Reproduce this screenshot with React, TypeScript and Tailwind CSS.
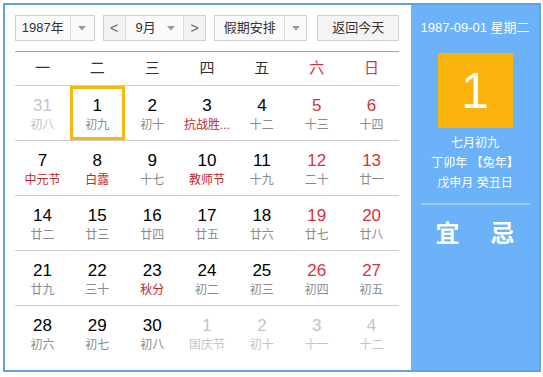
import React from 'react'

type Day = {
  n: number
  lunar: string
  dim?: boolean
  weekend?: boolean
  fest?: boolean
  today?: boolean
}

const weekdays = ['一', '二', '三', '四', '五', '六', '日']

const rows: Day[][] = [
  [
    { n: 31, lunar: '初八', dim: true },
    { n: 1, lunar: '初九', today: true },
    { n: 2, lunar: '初十' },
    { n: 3, lunar: '抗战胜...', fest: true },
    { n: 4, lunar: '十二' },
    { n: 5, lunar: '十三', weekend: true },
    { n: 6, lunar: '十四', weekend: true },
  ],
  [
    { n: 7, lunar: '中元节', fest: true },
    { n: 8, lunar: '白露', fest: true },
    { n: 9, lunar: '十七' },
    { n: 10, lunar: '教师节', fest: true },
    { n: 11, lunar: '十九' },
    { n: 12, lunar: '二十', weekend: true },
    { n: 13, lunar: '廿一', weekend: true },
  ],
  [
    { n: 14, lunar: '廿二' },
    { n: 15, lunar: '廿三' },
    { n: 16, lunar: '廿四' },
    { n: 17, lunar: '廿五' },
    { n: 18, lunar: '廿六' },
    { n: 19, lunar: '廿七', weekend: true },
    { n: 20, lunar: '廿八', weekend: true },
  ],
  [
    { n: 21, lunar: '廿九' },
    { n: 22, lunar: '三十' },
    { n: 23, lunar: '秋分', fest: true },
    { n: 24, lunar: '初二' },
    { n: 25, lunar: '初三' },
    { n: 26, lunar: '初四', weekend: true },
    { n: 27, lunar: '初五', weekend: true },
  ],
  [
    { n: 28, lunar: '初六' },
    { n: 29, lunar: '初七' },
    { n: 30, lunar: '初八' },
    { n: 1, lunar: '国庆节', dim: true },
    { n: 2, lunar: '初十', dim: true },
    { n: 3, lunar: '十一', dim: true },
    { n: 4, lunar: '十二', dim: true },
  ],
]

function Caret() {
  return (
    <svg width="8" height="5" viewBox="0 0 8 5">
      <path d="M0 0h8L4 4.5z" fill="#999" />
    </svg>
  )
}

function DayCell({ d }: { d: Day }) {
  const numColor = d.dim ? 'text-[#c4c4c4]' : d.weekend ? 'text-[#d3333f]' : 'text-black'
  const lunarColor = d.dim
    ? 'text-[#c4c4c4]'
    : d.fest
      ? 'text-[#c1262f]'
      : 'text-[#8a8a8a]'
  return (
    <div
      className={`flex flex-1 flex-col items-center pt-[10px] ${
        d.today ? 'shadow-[inset_0_0_0_3px_#f7b70f]' : ''
      }`}
    >
      <div className={`text-[17px] leading-[20px] ${numColor}`}>{d.n}</div>
      <div className={`text-[12px] leading-[18px] whitespace-nowrap ${lunarColor}`}>{d.lunar}</div>
    </div>
  )
}

export default function App() {
  return (
    <div
      className="h-[377px] w-[543px] bg-white p-[3px]"
      style={{ fontFamily: '"Liberation Sans", "Noto Sans CJK SC", sans-serif' }}
    >
      <div className="flex h-[369px] w-[538px] border-2 border-[#62a2e0]">
        {/* calendar side */}
        <div className="flex w-[406px] flex-col pl-[10px] pr-[12px] pt-[10px]">
          <div className="flex h-[26px] text-[13px] text-[#333]">
            <div className="flex w-[80px] border border-[#cfcfcf] bg-[#fafafa]">
              <div className="flex flex-1 items-center justify-center">1987年</div>
              <div className="flex w-[24px] items-center justify-center border-l border-[#dcdcdc]">
                <Caret />
              </div>
            </div>
            <div className="ml-[8px] flex w-[104px] border border-[#cfcfcf] bg-[#fafafa]">
              <div className="flex w-[22px] items-center justify-center border-r border-[#dcdcdc] bg-[#f2f2f2] text-[14px] text-[#666]">
                &lt;
              </div>
              <div className="flex flex-1 items-center pl-[10px]">
                <span>9月</span>
                <span className="ml-auto mr-[8px] flex">
                  <Caret />
                </span>
              </div>
              <div className="flex w-[22px] items-center justify-center border-l border-[#dcdcdc] bg-[#f2f2f2] text-[14px] text-[#666]">
                &gt;
              </div>
            </div>
            <div className="ml-[8px] flex w-[94px] border border-[#cfcfcf] bg-[#fafafa]">
              <div className="flex flex-1 items-center justify-center">假期安排</div>
              <div className="flex w-[22px] items-center justify-center border-l border-[#dcdcdc]">
                <Caret />
              </div>
            </div>
            <div className="ml-[10px] flex w-[82px] items-center justify-center border border-[#cfcfcf] bg-[#f4f4f4]">
              返回今天
            </div>
          </div>

          <div className="mt-[10px] h-px bg-[#7aaedc]" />

          <div className="flex h-[34px] items-center border-b border-[#cccccc] text-[15px]">
            {weekdays.map((w, i) => (
              <div
                key={w}
                className={`flex-1 text-center ${i >= 5 ? 'text-[#d3333f]' : 'text-[#333]'}`}
              >
                {w}
              </div>
            ))}
          </div>

          {rows.map((row, ri) => (
            <div
              key={ri}
              className={`flex h-[55px] ${ri < rows.length - 1 ? 'border-b border-[#cccccc]' : ''}`}
            >
              {row.map((d, di) => (
                <DayCell key={di} d={d} />
              ))}
            </div>
          ))}
        </div>

        {/* info panel */}
        <div className="flex flex-1 flex-col items-center bg-[#6cb2f9] pt-[14px] text-white">
          <div className="text-[13px] leading-[18px]">1987-09-01 星期二</div>
          <div className="mt-[16px] flex h-[75px] w-[75px] items-center justify-center bg-[#fbb40e] text-[50px] leading-none">
            1
          </div>
          <div className="mt-[5px] text-center text-[12px] leading-[20px]">
            <div>七月初九</div>
            <div>丁卯年 【兔年】</div>
            <div>戊申月 癸丑日</div>
          </div>
          <div className="mt-[10px] h-[2px] w-[109px] bg-[#9ccbfa]" />
          <div className="mt-[14px] flex gap-[31px] text-[24px] font-bold leading-[30px]">
            <span>宜</span>
            <span>忌</span>
          </div>
        </div>
      </div>
    </div>
  )
}
